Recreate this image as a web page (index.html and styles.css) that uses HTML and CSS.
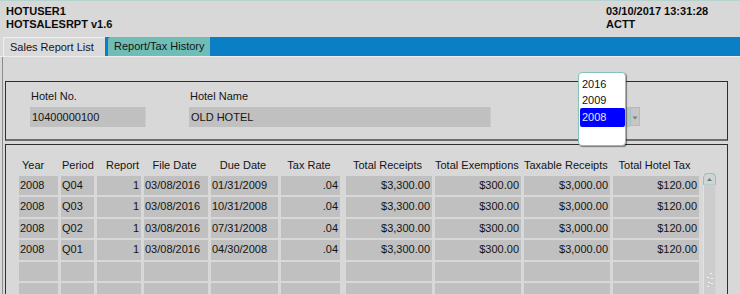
FILE: index.html
```html
<!DOCTYPE html>
<html>
<head>
<meta charset="utf-8">
<link rel="stylesheet" href="styles.css">
</head>
<body>
<div class="top">
  <div class="ident"><div>HOTUSER1</div><div>HOTSALESRPT v1.6</div></div>
  <div class="stamp"><div>03/10/2017 13:31:28</div><div>ACTT</div></div>
</div>
<div class="tabs">
  <div class="tab active">Sales Report List</div>
  <div class="tabstrip"><div class="tab other">Report/Tax History</div></div>
</div>
<div class="content">
  <div class="hotel">
    <div class="field f-no"><div class="lbl">Hotel No.</div><div class="inp">10400000100</div></div>
    <div class="field f-name"><div class="lbl">Hotel Name</div><div class="inp">OLD HOTEL</div></div>
    <div class="combo">
      <div class="combo-val"></div>
      <div class="combo-btn"><svg width="10" height="19" viewBox="0 0 10 19"><path d="M2.5 8.5h5l-2.5 3z" fill="#7b7b7b"/></svg></div>
      <div class="popup">
        <div class="opt">2016</div>
        <div class="opt">2009</div>
        <div class="opt sel">2008</div>
      </div>
    </div>
  </div>
  <div class="list">
    <div class="grid">
      <div class="h l">Year</div><div class="h pl">Period</div><div class="h rr">Report</div><div class="h">File Date</div><div class="h">Due Date</div><div class="h">Tax Rate</div><div class="h">Total Receipts</div><div class="h">Total Exemptions</div><div class="h">Taxable Receipts</div><div class="h">Total Hotel Tax</div>

      <div class="c">2008</div><div class="c">Q04</div><div class="c r">1</div><div class="c">03/08/2016</div><div class="c">01/31/2009</div><div class="c r">.04</div><div class="c r">$3,300.00</div><div class="c r">$300.00</div><div class="c r">$3,000.00</div><div class="c r">$120.00</div>

      <div class="c">2008</div><div class="c">Q03</div><div class="c r">1</div><div class="c">03/08/2016</div><div class="c">10/31/2008</div><div class="c r">.04</div><div class="c r">$3,300.00</div><div class="c r">$300.00</div><div class="c r">$3,000.00</div><div class="c r">$120.00</div>

      <div class="c">2008</div><div class="c">Q02</div><div class="c r">1</div><div class="c">03/08/2016</div><div class="c">07/31/2008</div><div class="c r">.04</div><div class="c r">$3,300.00</div><div class="c r">$300.00</div><div class="c r">$3,000.00</div><div class="c r">$120.00</div>

      <div class="c">2008</div><div class="c">Q01</div><div class="c r">1</div><div class="c">03/08/2016</div><div class="c">04/30/2008</div><div class="c r">.04</div><div class="c r">$3,300.00</div><div class="c r">$300.00</div><div class="c r">$3,000.00</div><div class="c r">$120.00</div>

      <div class="c"></div><div class="c"></div><div class="c"></div><div class="c"></div><div class="c"></div><div class="c"></div><div class="c"></div><div class="c"></div><div class="c"></div><div class="c"></div>

      <div class="c"></div><div class="c"></div><div class="c"></div><div class="c"></div><div class="c"></div><div class="c"></div><div class="c"></div><div class="c"></div><div class="c"></div><div class="c"></div>
    </div>
    <div class="scroll">
      <div class="sb-up"><svg width="11" height="11" viewBox="0 0 11 11"><path d="M3 7l2.5-3 2.5 3z" fill="#4f8883"/></svg></div>
      <div class="sb-grip"><svg width="11" height="16" viewBox="0 0 11 16"><g fill="#f4f4f4"><rect x="6" y="1" width="2" height="1"/><rect x="3" y="5" width="2" height="1"/><rect x="7" y="6" width="2" height="1"/><rect x="4" y="10" width="2" height="1"/><rect x="7" y="11" width="2" height="1"/><rect x="3" y="14" width="2" height="1"/></g></svg></div>
    </div>
  </div>
</div>
</body>
</html>
```

FILE: styles.css
```css
html, body {
  margin: 0;
  padding: 0;
}
body {
  background: #d8d8d8;
  font-family: "Liberation Sans", Arial, sans-serif;
  font-size: 11px;
  color: #141414;
  width: 740px;
  height: 294px;
  overflow: hidden;
}
.top {
  display: flex;
  border-top: 1px solid #b5d3cf;
  padding: 4px 0 6px 6px;
  font-weight: bold;
  line-height: 13px;
  color: #0c0c0c;
}
.stamp {
  margin-left: auto;
  width: 134px;
}
.tabs {
  display: flex;
  height: 19px;
  padding-left: 3px;
  border-bottom: 1px solid #eeeeee;
  line-height: 19px;
}
.tab {
  width: 102px;
  box-sizing: border-box;
  white-space: nowrap;
}
.tab.active {
  background: #dadada;
  border-top: 1px solid #f0f0f0;
  border-left: 1px solid #f0f0f0;
  line-height: 18px;
  padding-left: 6px;
}
.tabstrip {
  flex: 1;
  display: flex;
  background: #0a7fc5;
  padding-left: 3px;
}
.tab.other {
  background: #6fbdb6;
  border-top-left-radius: 3px;
  padding-left: 6px;
}
.content {
  margin-left: 2px;
  border-left: 1px solid #8c8c8c;
  padding: 24px 12px 0 2px;
  height: 237px;
  box-sizing: border-box;
  overflow: hidden;
}
.hotel {
  display: flex;
  align-items: flex-end;
  border: 1px solid #2e2e2e;
  border-bottom: 2px solid #6c6c6c;
  padding: 8px 0 12px 24px;
}
.field {
  display: flex;
  flex-direction: column;
  gap: 4px;
}
.lbl {
  line-height: 13px;
  padding-left: 1px;
}
.inp {
  height: 20px;
  line-height: 20px;
  background: #c0c0c0;
  padding-left: 2px;
  box-sizing: border-box;
  border-right: 1px solid #cbcbcb;
}
.f-no { width: 116px; }
.f-name { width: 302px; margin-left: 43px; }
.combo {
  position: relative;
  display: flex;
  height: 20px;
  margin-left: 89px;
}
.combo-val {
  width: 50px;
  background: #c0c0c0;
}
.combo-btn {
  width: 10px;
  height: 19px;
  background: #c6c6c6;
  border: 1px solid #98c6c1;
  box-sizing: border-box;
}
.combo-btn svg { display: block; margin-left: -1px; }
.popup {
  position: absolute;
  left: -2px;
  top: -35px;
  width: 48px;
  height: 74px;
  box-sizing: border-box;
  background: #ffffff;
  border: 1px solid #86c2bc;
  border-radius: 4px;
  box-shadow: 1px 1px 1px rgba(0, 0, 0, 0.45);
  padding-top: 3px;
  z-index: 5;
  color: #111;
}
.opt {
  line-height: 16px;
  padding-left: 3px;
}
.opt.sel {
  line-height: 19px;
  width: 45px;
  box-sizing: border-box;
  margin-left: 1px;
  padding-left: 2px;
  background: #0000ff;
  color: #e6e6ff;
  border-radius: 2px;
}
.list {
  display: flex;
  align-items: flex-start;
  gap: 4px;
  margin-top: 3px;
  border: 1px solid #2e2e2e;
  border-bottom: none;
  padding: 14px 10px 0 13px;
  height: 135px;
  overflow: hidden;
}
.grid {
  display: grid;
  grid-template-columns: 42px 36px 47px 67px 70px 65px 89px 89px 89px 86px;
  grid-template-rows: 14.5px repeat(6, 19.5px);
  row-gap: 2px;
}
.h, .c {
  margin-right: 3px;
  white-space: nowrap;
}
.h:nth-child(10n), .c:nth-child(10n) { margin-right: 0; }
.h:nth-child(10n+6), .c:nth-child(10n+6) { margin-right: 6px; }
.h {
  line-height: 13px;
  text-align: center;
  padding-right: 3px;
}
.h.l { text-align: left; padding-left: 3px; padding-right: 0; }
.h.pl { text-align: left; padding-left: 1px; padding-right: 0; }
.h.rr { text-align: right; padding-right: 2px; }
.c {
  background: #c0c0c0;
  line-height: 19.5px;
  padding: 0 2px 0 1px;
  overflow: hidden;
}
.c.r { text-align: right; }
.scroll {
  width: 13px;
  height: 130px;
  margin-top: 14px;
  background: #cdcdcd;
  box-sizing: border-box;
  border-left: 1px solid #e2e2e2;
  border-right: 1px solid #d4d4d4;
  display: flex;
  flex-direction: column;
}
.sb-up {
  height: 12px;
  box-sizing: border-box;
  border: 1px solid #8cc3bd;
  border-bottom-color: #b6cfcc;
  border-radius: 5px 5px 0 0;
  background: #d3d3d3;
  margin-left: -1px;
  margin-right: -1px;
}
.sb-up svg { display: block; margin: 0 auto; }
.sb-grip {
  margin-top: 87px;
}
.sb-grip svg { display: block; }
```
